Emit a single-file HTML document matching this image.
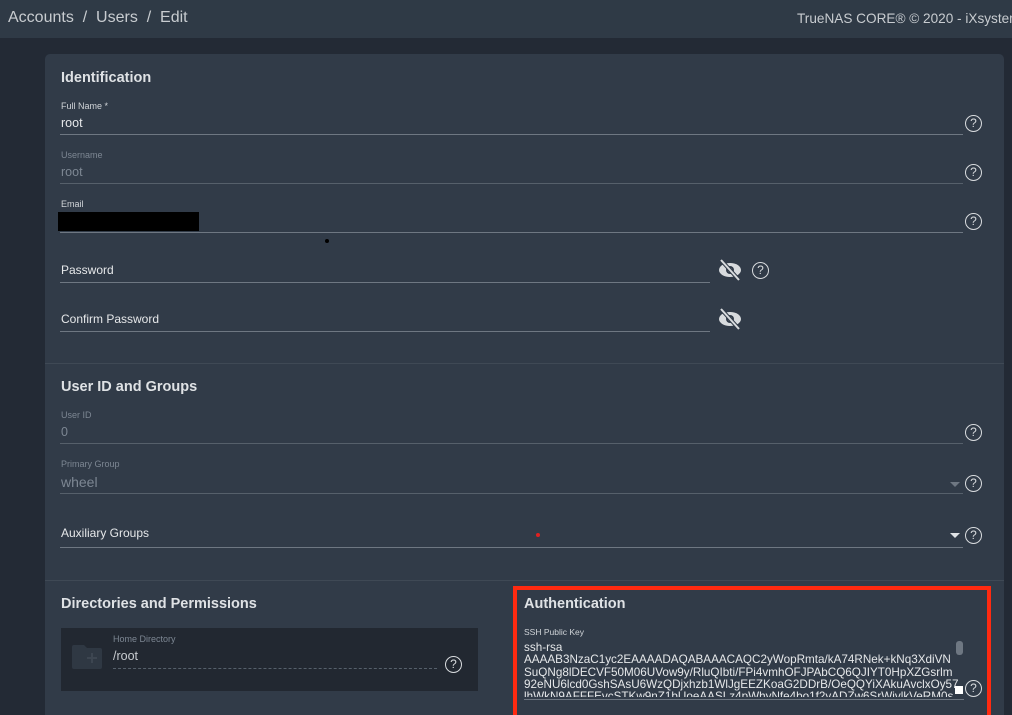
<!DOCTYPE html>
<html style="overflow:hidden"><head><style>
html,body{overflow:hidden;height:715px}
body{margin:0;width:1012px;background:#232a35;font-family:"Liberation Sans",sans-serif;color:#e0e3e6;position:relative}
.a{position:absolute}
.hdr{left:0;top:0;width:1012px;height:38px;background:#2f3a46}
.card{left:45px;top:54px;width:959px;height:661px;background:#313b48;border-radius:5px 5px 0 0}
.h{font-size:14.5px;font-weight:bold;color:#dfe2e5}
.lbl{font-size:9px;color:#d0d4d8}
.val{font-size:12.5px;color:#e6e8ea}
.a.dim{color:#7d8793}
.ul{height:1px;background:#6e7782}
.q{width:15px;height:15px;border:1.5px solid #d8dbde;border-radius:50%;font-size:12px;text-align:center;line-height:15px;color:#d8dbde}
.div{height:1px;background:#3f4955;left:45px;width:959px}
</style></head><body>
<div class="a hdr"></div>
<div class="a" style="left:8px;top:9px;font-size:16px;color:#c8ccd0">Accounts&nbsp;&nbsp;/&nbsp;&nbsp;Users&nbsp;&nbsp;/&nbsp;&nbsp;Edit</div>
<div class="a" style="left:797px;top:11px;font-size:13.6px;color:#c8ccd0;white-space:nowrap">TrueNAS CORE® © 2020 - iXsystems</div>
<div class="a card"></div>

<div class="a h" style="left:61px;top:70px">Identification</div>
<div class="a lbl" style="left:61px;top:101px">Full Name *</div>
<div class="a val" style="left:61px;top:116px">root</div>
<div class="a ul" style="left:60px;top:134px;width:903px"></div>
<div class="a q" style="left:965px;top:115px">?</div>

<div class="a lbl dim" style="left:61px;top:150px">Username</div>
<div class="a val dim" style="left:61px;top:165px">root</div>
<div class="a ul" style="left:60px;top:183px;width:903px;background:#56606b"></div>
<div class="a q" style="left:965px;top:164px">?</div>

<div class="a lbl" style="left:61px;top:199px">Email</div>
<div class="a" style="left:58px;top:212px;width:141px;height:19px;background:#000"></div>
<div class="a ul" style="left:60px;top:232px;width:903px"></div>
<div class="a q" style="left:965px;top:213px">?</div>
<div class="a" style="left:325px;top:239px;width:4px;height:4px;border-radius:50%;background:#000"></div>

<div class="a val" style="left:61px;top:263px;font-size:12px">Password</div>
<div class="a ul" style="left:60px;top:282px;width:650px"></div>
<svg class="a" style="left:718px;top:259px" width="24" height="22" viewBox="0 0 24 22"><ellipse cx="12" cy="11" rx="11" ry="7" fill="#d8dbde"/><circle cx="12" cy="11" r="4" fill="#313b48"/><circle cx="12" cy="11" r="2" fill="#d8dbde"/><line x1="3" y1="1" x2="21" y2="21" stroke="#313b48" stroke-width="4"/><line x1="3" y1="1" x2="21" y2="21" stroke="#d8dbde" stroke-width="2"/></svg>
<div class="a q" style="left:752px;top:262px">?</div>

<div class="a val" style="left:61px;top:312px;font-size:12px">Confirm Password</div>
<div class="a ul" style="left:60px;top:331px;width:650px"></div>
<svg class="a" style="left:718px;top:308px" width="24" height="22" viewBox="0 0 24 22"><ellipse cx="12" cy="11" rx="11" ry="7" fill="#d8dbde"/><circle cx="12" cy="11" r="4" fill="#313b48"/><circle cx="12" cy="11" r="2" fill="#d8dbde"/><line x1="3" y1="1" x2="21" y2="21" stroke="#313b48" stroke-width="4"/><line x1="3" y1="1" x2="21" y2="21" stroke="#d8dbde" stroke-width="2"/></svg>

<div class="a div" style="top:363px"></div>
<div class="a h" style="left:61px;top:379px">User ID and Groups</div>
<div class="a lbl dim" style="left:61px;top:410px">User ID</div>
<div class="a val dim" style="left:61px;top:425px">0</div>
<div class="a ul" style="left:60px;top:443px;width:903px;background:#56606b"></div>
<div class="a q" style="left:965px;top:424px">?</div>

<div class="a lbl dim" style="left:61px;top:459px">Primary Group</div>
<div class="a val dim" style="left:61px;top:474px;font-size:14px">wheel</div>
<div class="a ul" style="left:60px;top:493px;width:903px;background:#56606b"></div>
<div class="a" style="left:950px;top:482px;border-left:5px solid transparent;border-right:5px solid transparent;border-top:5px solid #6e7782"></div>
<div class="a q" style="left:965px;top:475px">?</div>

<div class="a val" style="left:61px;top:526px;font-size:12px">Auxiliary Groups</div>
<div class="a ul" style="left:60px;top:547px;width:903px"></div>
<div class="a" style="left:950px;top:533px;border-left:5px solid transparent;border-right:5px solid transparent;border-top:5px solid #e0e3e6"></div>
<div class="a q" style="left:965px;top:527px">?</div>
<div class="a" style="left:536px;top:533px;width:4px;height:4px;border-radius:50%;background:#e02020"></div>

<div class="a div" style="top:580px"></div>
<div class="a h" style="left:61px;top:596px">Directories and Permissions</div>
<div class="a" style="left:61px;top:628px;width:417px;height:63px;background:#222831"></div>
<svg class="a" style="left:72px;top:643px" width="30" height="26" viewBox="0 0 30 26"><path d="M2 2h10l3 3h13a2 2 0 0 1 2 2v17a2 2 0 0 1-2 2H2a2 2 0 0 1-2-2V4a2 2 0 0 1 2-2z" fill="#2f3843"/><path d="M20 10v10M15 15h10" stroke="#3d4651" stroke-width="2"/></svg>
<div class="a lbl dim" style="left:113px;top:634px">Home Directory</div>
<div class="a val" style="left:113px;top:649px;color:#c8ccd0">/root</div>
<div class="a" style="left:113px;top:668px;width:324px;border-top:1px dashed #56606b"></div>
<div class="a q" style="left:445px;top:656px">?</div>

<div class="a h" style="left:524px;top:596px">Authentication</div>
<div class="a lbl" style="left:524px;top:627px;font-size:8.5px">SSH Public Key</div>
<div class="a" style="left:524px;top:642px;width:435px;height:55px;overflow:hidden;font-size:11.7px;line-height:12.3px;color:#e6e8ea;white-space:pre">ssh-rsa
AAAAB3NzaC1yc2EAAAADAQABAAACAQC2yWopRmta/kA74RNek+kNq3XdiVN
SuQNg8lDECVF50M06UVow9y/RluQIbti/FPi4vmhOFJPAbCQ6QJIYT0HpXZGsrlm
92eNU6lcd0GshSAsU6WzQDjxhzb1WlJgEEZKoaG2DDrB/OeQQYiXAkuAvclxOy57
lhWkN9AFFFEvcSTKw9nZ1bUoeAASLz4pWhyNfe4bo1f2yADZw6SrWjvlkVeRM0s</div>
<div class="a" style="left:956px;top:641px;width:7px;height:14px;border-radius:3px;background:#6e7782"></div>
<div class="a" style="left:955px;top:686px;width:8px;height:8px;background:#fff"></div>
<div class="a ul" style="left:524px;top:699px;width:440px"></div>
<div class="a q" style="left:965px;top:680px">?</div>
<div class="a" style="left:513px;top:586px;width:470px;height:130px;border:4px solid #ff2a10"></div>
</body></html>
